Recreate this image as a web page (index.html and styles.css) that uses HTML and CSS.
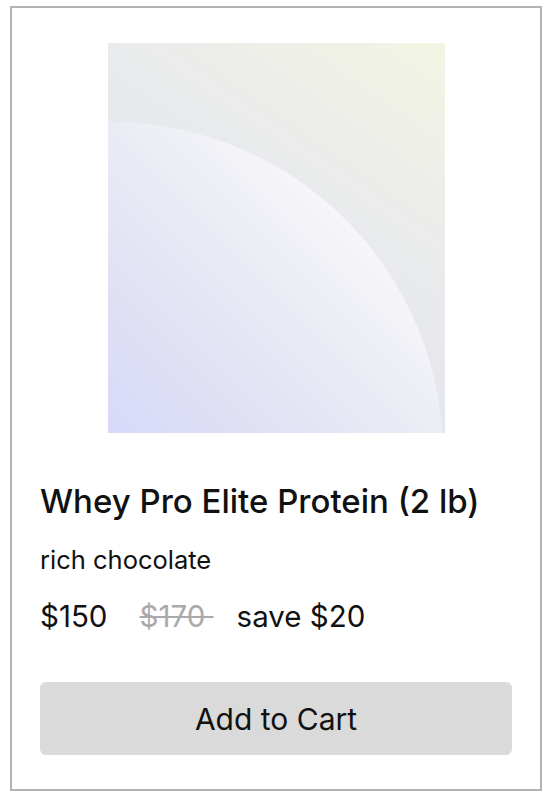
FILE: index.html
```html
<!DOCTYPE html>
<html lang="en">
<head>
    <meta charset="UTF-8">
    <meta name="viewport" content="width=device-width, initial-scale=1.0">
    <title>Whey Pro Elite Protein</title>
    <link rel="stylesheet" href="styles.css">
</head>
<body>

    <div class="card">
        <div class="product-image"></div>

        <h2 class="title">Whey Pro Elite Protein (2 lb)</h2>
        <p class="flavor">rich chocolate</p>

        <div class="prices">
            <span class="price">$150</span>
            <s class="was">$170&nbsp;</s>
            <span class="save">save $20</span>
        </div>

        <button class="add-btn">Add to Cart</button>
    </div>

</body>
</html>
```

FILE: styles.css
```css
body {
    font-family: 'Inter', 'Noto Sans', sans-serif;
    margin: 6px 6px 6px 10px;
    background: #fff;
    color: #111;
}

/* Product card */
.card {
    border: 2px solid #b3b3b3;
    padding: 35px 28px 34px;
}

/* Placeholder product shot: soft gradient with a big quarter circle */
.product-image {
    position: relative;
    overflow: hidden;
    width: 337px;
    height: 390px;
    margin: 0 auto;
    background: linear-gradient(35deg, #dcdef2 0%, #e4e6ef 35%, #e9eaec 60%, #eeefe8 80%, #f3f5e3 100%);
}

.product-image::before {
    content: "";
    position: absolute;
    left: -331px;
    top: 79px;
    width: 666px;
    height: 666px;
    border-radius: 50%;
    background: linear-gradient(45deg, #d8d9fa 52%, #dfe0f4 62%, #e9ebf4 74%, #f6f6f9 85%, #fff 100%);
}

.title {
    margin: 51px 0 0;
    font-size: 33px;
    line-height: 34px;
    font-weight: 500;
}

.flavor {
    margin: 28px 0 0;
    font-size: 25.5px;
    line-height: 28px;
}

/* Price row */
.prices {
    margin-top: 26px;
    display: flex;
    font-size: 29.5px;
    line-height: 32px;
}

.price {
    margin-right: 32px;
}

.was {
    color: #aaa;
    margin-right: 23px;
}

.add-btn {
    display: block;
    width: 100%;
    height: 73px;
    margin-top: 50px;
    border: none;
    border-radius: 6px;
    background: #dadada;
    color: #111;
    font-family: inherit;
    font-size: 30px;
}
```
